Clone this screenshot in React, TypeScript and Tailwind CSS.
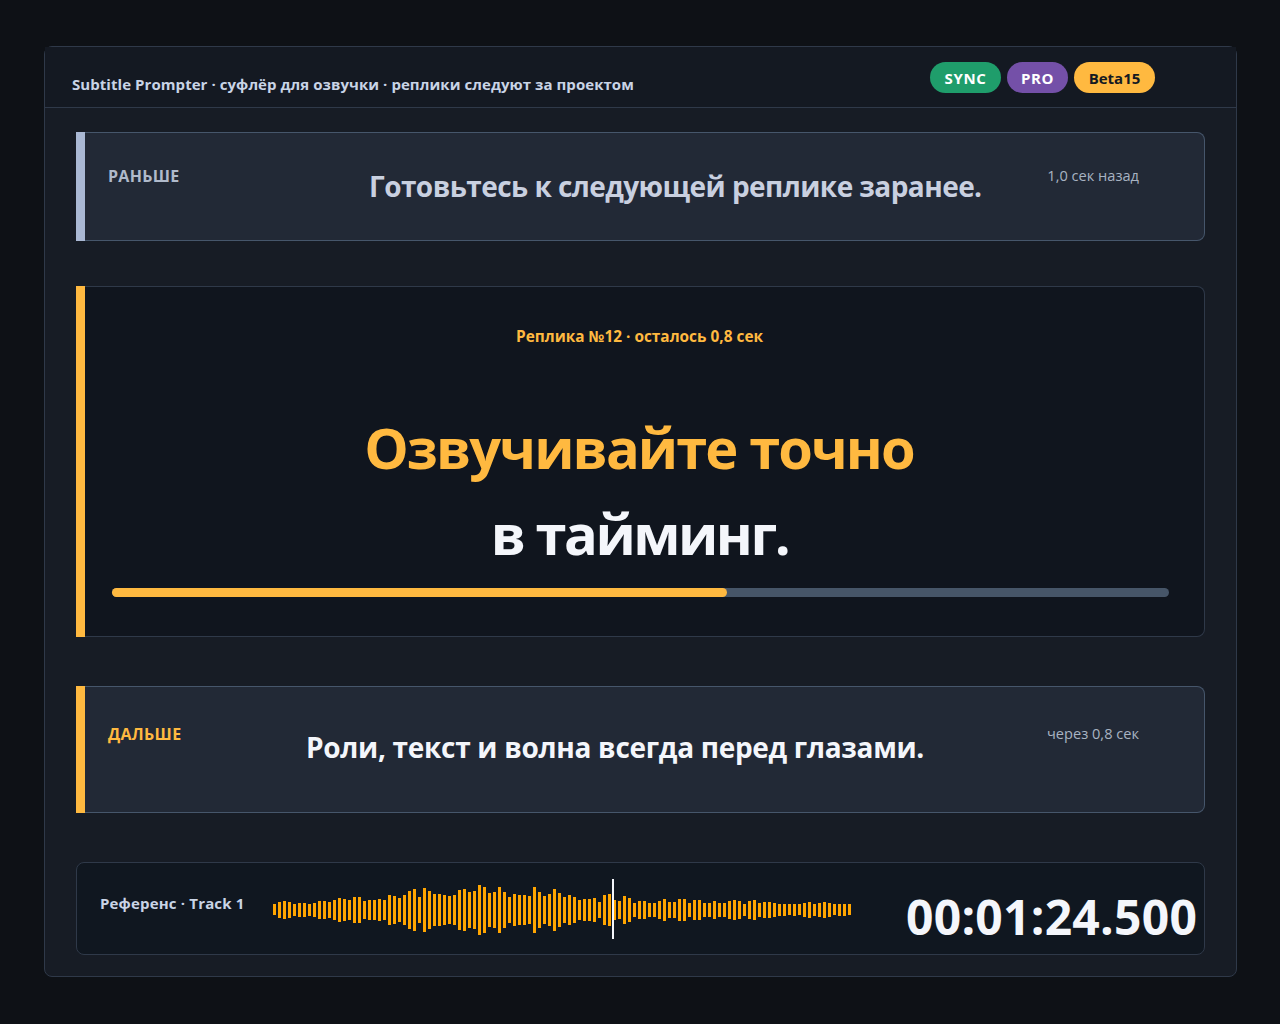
const bars = [
  11, 16, 18, 16, 12, 14, 14, 12, 14, 18, 18, 16, 20, 24, 22, 20, 26, 26, 18, 20, 20, 22, 20, 30, 28, 24, 30, 38, 42, 26,
  44, 38, 32, 32, 30, 28, 30, 40, 42, 36, 38, 50, 46, 34, 36, 46, 36, 26, 32, 30, 30, 28, 46, 36, 28, 32, 42, 34, 26, 30,
  26, 20, 22, 22, 24, 16, 30, 32, 20, 18, 28, 24, 14, 18, 18, 14, 14, 18, 22, 16, 16, 22, 22, 14, 20, 20, 14, 14, 18, 14,
  14, 18, 20, 18, 12, 18, 20, 14, 16, 16, 14, 12, 12, 11, 12, 11, 14, 16, 12, 14, 16, 14, 11, 12, 12, 11,
];

function Waveform() {
  return (
    <svg width="580" height="60" viewBox="0 0 580 60" className="block shrink-0">
      {bars.map((h, i) => (
        <rect key={i} x={i * 5} y={31 - Math.ceil(h / 2)} width="3" height={h} fill="#ffa500" />
      ))}
      <rect x="339" y="0" width="2" height="60" fill="#f4f6fb" />
    </svg>
  );
}

export default function App() {
  return (
    <div className="flex h-[1024px] w-[1280px] items-start bg-[#0e1116] pl-[44px] pt-[46px] font-['Open_Sans',sans-serif]">
      <div className="h-[931px] w-[1193px] rounded-lg border border-[#2f3949] bg-[#171c25]">
        {/* Top bar */}
        <div className="flex h-[61px] items-start justify-between border-b border-[#2f3949] bg-[#141922] pl-[27px]">
          <span className="mt-[26px] text-[15px] font-bold leading-[22px] tracking-[0.06px] text-[#c9d4e6]">
            Subtitle Prompter · суфлёр для озвучки · реплики следуют за проектом
          </span>
          <div className="mr-[81px] mt-[15px] flex gap-[6px]">
            <span className="flex h-[31px] w-[71px] items-center justify-center rounded-full bg-[#1f9d6b] pt-[2px] text-[15px] font-bold tracking-[0.6px] text-white">
              SYNC
            </span>
            <span className="flex h-[31px] w-[61px] items-center justify-center rounded-full bg-[#7450a8] pt-[2px] text-[15px] font-bold tracking-[0.6px] text-white">
              PRO
            </span>
            <span className="flex h-[31px] w-[81px] items-center justify-center rounded-full bg-[#ffb940] pt-[2px] text-[15px] font-bold text-[#141922]">
              Beta15
            </span>
          </div>
        </div>

        <div className="flex flex-col px-[31px] pt-[24px]">
          {/* Previous line */}
          <div className="flex h-[109px]">
            <div className="w-[9px] shrink-0 bg-[#aab8d4]" />
            <div className="flex flex-1 rounded-r-lg border border-l-0 border-[#46566b] bg-[#222936]">
              <span className="ml-[23px] mt-[31px] w-[120px] text-[16px] font-bold leading-[24px] tracking-[0.3px] text-[#b0bacb]">
                РАНЬШЕ
              </span>
              <span className="mt-[34px] flex-1 pl-[141px] text-[28px] font-bold leading-[38px] tracking-[-0.56px] text-[#c9d0e0]">
                Готовьтесь к следующей реплике заранее.
              </span>
              <span className="mr-[65px] mt-[30px] text-[14.6px] leading-[24px] text-[#a8b3c2]">1,0 сек назад</span>
            </div>
          </div>

          {/* Current line */}
          <div className="mt-[45px] flex h-[351px]">
            <div className="w-[9px] shrink-0 bg-[#ffb940]" />
            <div className="flex flex-1 flex-col items-center rounded-r-lg border border-l-0 border-[#2f3949] bg-[#10151e] pl-[27px] pr-[35px]">
              <span className="mr-[2px] mt-[39px] text-[15.4px] font-bold leading-[22px] text-[#ffb940]">
                Реплика №12 · осталось 0,8 сек
              </span>
              <span className="mr-[3px] mt-[56px] text-[56px] font-bold leading-[86px] tracking-[-1.9px] text-[#ffb940]">
                Озвучивайте точно
              </span>
              <span className="mr-[2px] text-[56px] font-bold leading-[86px] tracking-[-2.5px] text-[#f4f6fb]">
                в тайминг.
              </span>
              <div className="mt-[12px] h-[9px] w-full rounded-full bg-[#465568]">
                <div className="h-full w-[615px] rounded-full bg-[#ffb940]" />
              </div>
            </div>
          </div>

          {/* Next line */}
          <div className="mt-[49px] flex h-[127px]">
            <div className="w-[9px] shrink-0 bg-[#ffb940]" />
            <div className="flex flex-1 rounded-r-lg border border-l-0 border-[#46566b] bg-[#222936]">
              <span className="ml-[23px] mt-[35px] w-[120px] text-[16px] font-bold leading-[24px] tracking-[0.3px] text-[#ffb940]">
                ДАЛЬШЕ
              </span>
              <span className="mt-[41px] flex-1 pl-[78px] text-[28px] font-bold leading-[38px] tracking-[-0.3px] text-[#f4f6fb]">
                Роли, текст и волна всегда перед глазами.
              </span>
              <span className="mr-[65px] mt-[34px] text-[14.6px] leading-[24px] text-[#a8b3c2]">через 0,8 сек</span>
            </div>
          </div>

          {/* Reference track */}
          <div className="mt-[49px] flex h-[93px] items-center rounded-lg border border-[#2f3949] bg-[#101720] pl-[23px]">
            <span className="mb-[11px] w-[173px] text-[15px] font-bold leading-[22px] tracking-[0.17px] text-[#c9d4e6]">
              Референс · Track 1
            </span>
            <Waveform />
            <span className="ml-[53px] mt-[16px] text-[48px] font-bold leading-[66px] tracking-[0.25px] text-[#f4f6fb]">
              00:01:24.500
            </span>
          </div>
        </div>
      </div>
    </div>
  );
}
